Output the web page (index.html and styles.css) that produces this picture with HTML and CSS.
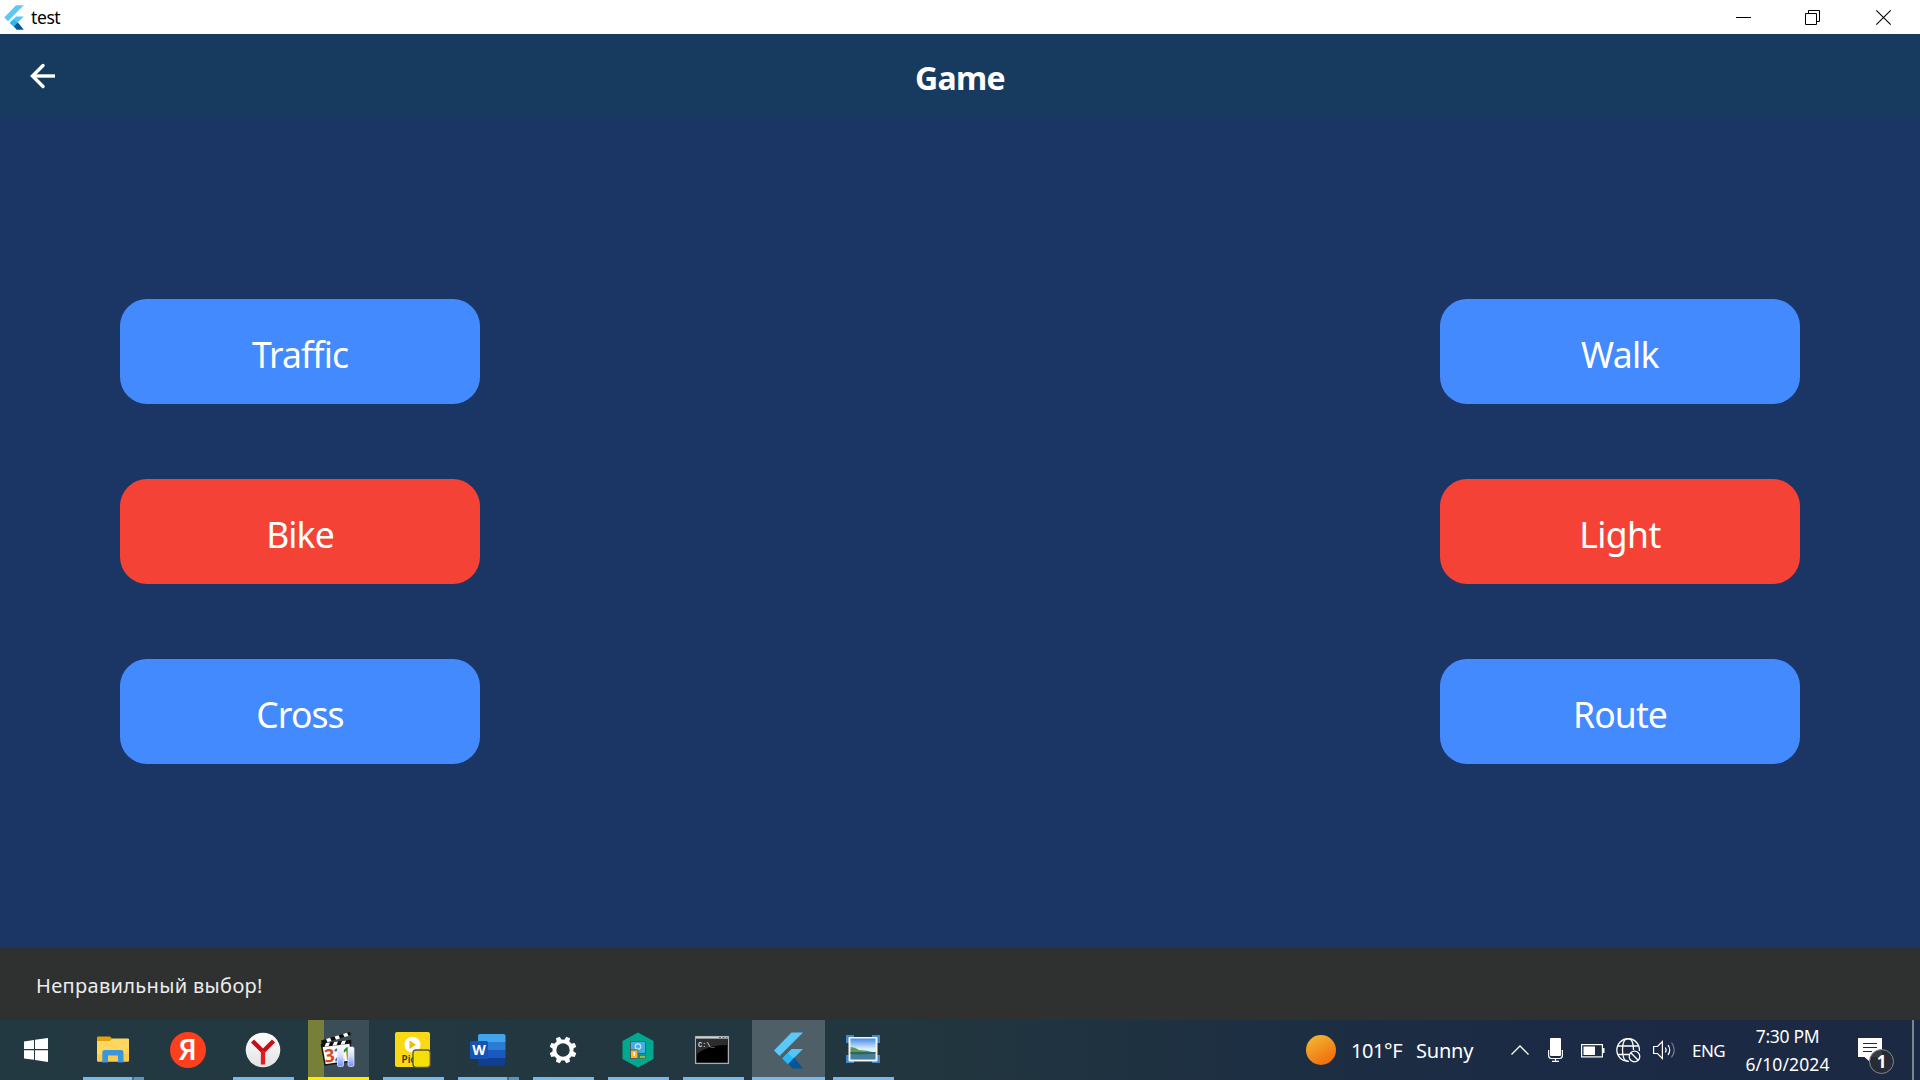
FILE: index.html
```html
<!DOCTYPE html>
<html lang="en">
<head>
<meta charset="utf-8">
<title>test</title>
<link rel="stylesheet" href="styles.css">
</head>
<body>
<svg class="defs" width="0" height="0" aria-hidden="true">
  <symbol id="flutter" viewBox="0 0 29 37">
    <path d="M17.500 0.500H29L5.500 24L0 18.500Z" fill="#5dc8f8"/>
    <path d="M17.500 17H29L14 32L8.500 26.300Z" fill="#54c5f8"/>
    <path d="M14 31.500L20 25.500L29 36.500H18.500Z" fill="#01579b"/>
    <path d="M8.300 26.500L14 21L19.500 26.500L14 32Z" fill="#29b6f6"/>
  </symbol>
</svg>

<header class="titlebar">
  <svg class="titlebar-logo" width="20" height="25"><use href="#flutter"/></svg>
  <span class="titlebar-text">test</span>
  <div class="window-controls">
    <button class="wc" aria-label="Minimize"><svg width="15" height="15"><path d="M0 7.500H15" stroke="#000"/></svg></button>
    <button class="wc" aria-label="Restore"><svg width="15" height="15" fill="none" stroke="#000"><path d="M.5 3.500H11.500V14.500H.5ZM3.500 3.500V.5H14.500V11.500H11.500"/></svg></button>
    <button class="wc wc-close" aria-label="Close"><svg width="15" height="15" stroke="#000" stroke-width="1.100"><path d="M.3 .3L14.700 14.700M14.700 .3L.3 14.700"/></svg></button>
  </div>
</header>

<div class="appbar">
  <button class="back" aria-label="Back"><svg width="26" height="26" fill="none" stroke="#fff" stroke-width="3.400"><path d="M25 13H3"/><path d="M13 2.500L2.500 13L13 23.500" stroke-linecap="round"/></svg></button>
  <h1 class="title">Game</h1>
</div>

<main class="board">
  <div class="column">
    <button class="card">Traffic</button>
    <button class="card wrong">Bike</button>
    <button class="card">Cross</button>
  </div>
  <div class="column">
    <button class="card walk">Walk</button>
    <button class="card wrong light">Light</button>
    <button class="card">Route</button>
  </div>
</main>

<div class="snackbar"><span class="snackbar-text">Неправильный выбор!</span></div>

<footer class="taskbar">
  <div class="task start"><svg width="24" height="24" fill="#fff"><path d="M0 3.400L10 2V11H0ZM11 1.800L24 0V11H11ZM0 12.200H10V21.800L0 20.600ZM11 12.200H24V24L11 22Z"/></svg></div>
  <div class="task open grouped">
    <svg width="32" height="28">
      <path d="M0 1.500Q0 .5 1 .5H13L15.500 3L14 5H0Z" fill="#e3a208"/>
      <path d="M0 5H13L15.500 2.500H31Q32 2.500 32 3.500V24.500Q32 25.500 31 25.500H1Q0 25.500 0 24.500Z" fill="#ffd75e"/>
      <path d="M0 18H32V24.500Q32 25.500 31 25.500H1Q0 25.500 0 24.500Z" fill="#fbcb4b"/>
      <path d="M5.300 26.500V16.500Q5.300 14 7.800 14H24Q26.500 14 26.500 16.500V26.500H21V19.500H11V26.500Z" fill="#3a96dd"/>
    </svg>
  </div>
  <div class="task"><span class="yandex">Я</span></div>
  <div class="task open">
    <svg width="36" height="36">
      <defs><linearGradient id="yb" x1="0" y1="0" x2="0" y2="1"><stop offset="0" stop-color="#fff"/><stop offset="1" stop-color="#e2e2e2"/></linearGradient></defs>
      <circle cx="18" cy="18" r="17.300" fill="url(#yb)"/>
      <path d="M7.500 9L18 19.500M28.500 9L18 19.500" stroke="#c90d13" stroke-width="4.300" fill="none"/>
      <path d="M18 18.500V32.500" stroke="#e01b22" stroke-width="4.300"/>
    </svg>
  </div>
  <div class="task open media">
    <svg width="36" height="38">
      <defs><linearGradient id="pb" x1="0" y1="0" x2="0" y2="1"><stop offset="0" stop-color="#fff"/><stop offset=".45" stop-color="#d5dcf8"/><stop offset="1" stop-color="#6f8fff"/></linearGradient></defs>
      <path d="M1 9.500L30 1L31 4L2 13Z" fill="#101010"/>
      <path d="M6 8L10 6.800L11.500 10L7.500 11.200ZM14.500 5.500L18.500 4.300L20 7.500L16 8.700ZM23 3L27 1.800L28.500 4.900L24.500 6.100Z" fill="#fff"/>
      <path d="M1.500 14L30 10.500L32 30L5 34Z" fill="#fbfbfb" stroke="#151515" stroke-width="1.500"/>
      <path d="M1 12.500L31 8.800L31.500 12.500L1.500 16.200Z" fill="#101010"/>
      <path d="M6 12L10 11.500L8.500 15.200L4.500 15.700ZM14 11L18 10.500L16.500 14.200L12.500 14.700ZM22 10L26 9.500L24.500 13.200L20.500 13.700Z" fill="#fff"/>
      <g transform="rotate(-6 6 31)"><text x="5" y="31.500" class="clap" fill="#d9481c">3</text><text x="14.500" y="31.500" class="clap" fill="#3877bd">2</text><text x="22.500" y="31.500" class="clap" fill="#258b31">1</text></g>
      <rect x="17.500" y="16" width="6" height="19.500" rx="1.500" fill="url(#pb)" stroke="#e9eeff" stroke-width=".7"/>
      <rect x="28" y="16" width="6" height="19.500" rx="1.500" fill="url(#pb)" stroke="#e9eeff" stroke-width=".7"/>
    </svg>
  </div>
  <div class="task open">
    <svg width="36" height="36">
      <rect x="0" y="0" width="35" height="35" rx="2" fill="#f9d915"/>
      <circle cx="17.500" cy="12.700" r="8" fill="#fff"/><path d="M14.500 8.500L21 12.700L14.500 17Z" fill="#e9bd0c"/>
      <text x="6.500" y="31" class="pic">Pic</text>
      <rect x="18" y="18" width="17.300" height="17.300" rx="3" fill="#f4e008" stroke="#55554a" stroke-width="1.300"/>
    </svg>
  </div>
  <div class="task open grouped">
    <svg width="36" height="32">
      <path d="M8 2Q8 0 10 0H33.500Q35.500 0 35.500 2V8H8Z" fill="#41a5ee"/><path d="M8 8H35.500V16H8Z" fill="#2b7cd3"/><path d="M8 16H35.500V24H8Z" fill="#185abd"/><path d="M8 24H35.500V30Q35.500 32 33.500 32H10Q8 32 8 30Z" fill="#103f91"/>
      <rect x="0" y="7" width="18" height="18" rx="1.500" fill="#1753b4"/><text x="9" y="20.500" text-anchor="middle" class="word">W</text>
    </svg>
  </div>
  <div class="task open">
    <svg width="28" height="28" viewBox="-14 -14 28 28">
      <g fill="#fff"><circle r="10.500"/>
      <g id="teeth"><path id="tooth" d="M-2.800 -9.500L-2 -13.500H2L2.800 -9.500Z" transform="rotate(22.500)"/><use href="#tooth" transform="rotate(45)"/><use href="#tooth" transform="rotate(90)"/><use href="#tooth" transform="rotate(135)"/></g><use href="#teeth" transform="rotate(180)"/></g>
      <circle r="6.700" fill="#22373f"/>
    </svg>
  </div>
  <div class="task open">
    <svg width="32" height="36">
      <path d="M16 .5L31.500 9V27L16 35.500L.5 27V9Z" fill="#00a88e"/>
      <rect x="8.500" y="9.500" width="15" height="12" fill="#42aee5" stroke="#505c65"/><circle cx="16" cy="14.500" r="2.700" fill="none" stroke="#b8e8ff" stroke-width="1.300"/><path d="M16 17V20" stroke="#b8e8ff"/>
      <rect x="8.500" y="18" width="7.500" height="8.500" fill="#ffb61c" stroke="#505c65"/><path d="M12.200 20V24" stroke="#fff" stroke-width="1.500"/>
      <rect x="17.500" y="23.300" width="6" height="3" fill="#8bc53f" stroke="#505c65" stroke-width=".8"/>
    </svg>
  </div>
  <div class="task open console">
    <svg width="34" height="28">
      <rect x=".6" y=".6" width="32.800" height="26.800" fill="#000" stroke="#a9adb0" stroke-width="1.300"/><path d="M1 1.700H33" stroke="#c9d0d4" stroke-width="2"/><path d="M24 1.500H26M27.500 1.500H29.500M31 1.500H32.500" stroke="#456a99" stroke-width="1.200"/>
      <path d="M1.500 3H32V9Q12 9 2 18Z" fill="#2c2c2c"/><text x="3" y="10.500" class="cmd">C:\_</text>
    </svg>
  </div>
  <div class="task open active"><svg width="29" height="37"><use href="#flutter"/></svg></div>
  <div class="task open photo">
    <svg width="34" height="28">
      <defs><linearGradient id="sky" x1="0" y1="0" x2="0" y2="1"><stop offset="0" stop-color="#438be9"/><stop offset=".5" stop-color="#dceefb"/></linearGradient></defs>
      <path d="M0 0H8V8H0ZM26 0H34V8H26ZM0 20H8V28H0ZM26 20H34V28H26Z" fill="#4389ca"/>
      <rect x="2.500" y="2" width="29" height="24.500" rx="1" fill="#f5f3ed"/><rect x="4.500" y="3.500" width="25" height="21" fill="url(#sky)"/>
      <path d="M4.500 12Q9 12 13 15Q21 15 29.500 18H4.500Z" fill="#5e9950"/><path d="M4.500 17.500H29.500V24.500H4.500Z" fill="#447f9d"/><path d="M4.500 17H29.500V18.500Q16 20 4.500 19Z" fill="#2f6654"/>
    </svg>
  </div>

  <div class="tray">
    <svg class="sun" width="30" height="30"><defs><linearGradient id="sg" x1=".2" y1="0" x2=".8" y2="1"><stop offset="0" stop-color="#f2b830"/><stop offset="1" stop-color="#f1670c"/></linearGradient></defs><circle cx="15" cy="15" r="15" fill="url(#sg)"/></svg>
    <span class="temp">101°F</span>
    <span class="sky">Sunny</span>
    <svg class="chev" width="18" height="10" fill="none" stroke="#fff" stroke-width="1.300"><path d="M.5 9.500L9 1L17.500 9.500"/></svg>
    <svg class="mic" width="15" height="24" fill="none" stroke="#fff"><rect x="2" y="0" width="11" height="18" rx="1" fill="#fff" stroke="none"/><path d="M.6 12V17.500Q.6 20.500 3.500 20.500H11.500Q14.400 20.500 14.400 17.500V12M7.500 20.500V23M4 23.300H11" stroke-width="1.200"/></svg>
    <svg class="battery" width="24" height="14"><rect x=".6" y=".6" width="20.800" height="12.300" fill="none" stroke="#fff" stroke-width="1.200"/><path d="M22 4H23.500V9H22ZM2.500 2.500H14V11H2.500Z" fill="#fff"/></svg>
    <svg class="globe" width="25" height="25" fill="none" stroke="#fff" stroke-width="1.300"><path d="M23.400 13A11.300 11.300 0 1 0 13 23.300"/><path d="M17.500 12Q17.500 .7 12 .7Q6.500 .7 6.500 12Q6.500 23.300 12 23.300M2 8H22.500M2 16.500H13"/><circle cx="18.500" cy="18.500" r="5.300"/><path d="M14.800 14.800L22.200 22.200"/></svg>
    <svg class="speaker" width="23" height="20" fill="none" stroke="#fff" stroke-width="1.200"><path d="M.6 6.500H4.500L9.400 1.500V18.500L4.500 13.500H.6Z"/><path d="M12.300 7.500Q14 10 12.300 12.500M15 5Q18.500 10 15 15"/><path d="M18.500 2.500Q24 10 18.500 17.500" opacity=".4"/></svg>
    <span class="lang">ENG</span>
    <div class="clock"><span class="time">7:30 PM</span><span class="date">6/10/2024</span></div>
    <div class="notice">
      <svg width="24" height="24"><path d="M0 0H24V19H12V24L6.500 19H0Z" fill="#fff"/><path d="M5 5.500H19M5 9.500H19M5 13.500H14" stroke="#1b2a44" stroke-width="1.200"/></svg>
      <span class="badge">1</span>
    </div>
    <div class="peek"></div>
  </div>
</footer>
</body>
</html>
```
FILE: styles.css
```css
* { box-sizing: border-box; }
body {
  margin: 0; width: 1920px; height: 1080px; overflow: hidden;
  display: flex; flex-direction: column;
  font-family: "Noto Sans", "Open Sans", sans-serif;
  background: #1b3564; color: #fff;
}
.defs { display: none; }
svg { display: block; flex: none; overflow: visible; }
span { white-space: nowrap; }
button { border: 0; padding: 0; background: none; color: inherit; font: inherit; }

.titlebar { flex: none; height: 34px; background: #fff; color: #000; display: flex; align-items: center; padding-left: 4px; }
.titlebar-text { margin-left: 7px; font-size: 17.5px; line-height: 34px; letter-spacing: -.4px; }
.window-controls { margin-left: auto; display: flex; }
.wc { width: 69px; height: 34px; display: flex; align-items: center; justify-content: center; }
.wc-close { width: 73px; }

.appbar { flex: none; height: 84px; background: #173b5f; display: grid; grid-template-columns: 85px 1fr 85px; align-items: center; }
.back { justify-self: center; }
.title { margin: 0; padding-top: 4px; text-align: center; font-size: 32px; line-height: 40px; font-weight: 700; letter-spacing: -.7px; }

.board { flex: 1; display: flex; justify-content: space-between; align-items: center; padding: 0 120px 3px; }
.column { display: flex; flex-direction: column; gap: 75px; }
.card { width: 360px; height: 105px; border-radius: 27px; background: #448aff; font-size: 35.5px; line-height: 48px; padding-top: 5px; text-align: center; letter-spacing: -.9px; }
.walk, .light { letter-spacing: -.6px; }
.wrong { background: #f44336; }

.snackbar { flex: none; height: 72px; background: #2f3130; display: flex; align-items: center; padding: 3px 36px 0; }
.snackbar-text { font-size: 20px; letter-spacing: .33px; color: #ececec; }

.taskbar { flex: none; height: 60px; display: flex; background: linear-gradient(90deg, #233941, #22363f 48%, #1d2f42 65%, #1b2a45 82%, #1b2943); }
.task { flex: none; width: 61px; height: 60px; margin: 0 7px; padding-right: 2px; display: flex; align-items: center; justify-content: center; }
.start { width: 72px; margin: 0 4px 0 0; padding-right: 0; }
.open { border-bottom: 3px solid #76b9ed; padding-top: 3px; }
.grouped { border-image: linear-gradient(90deg, #76b9ed 47px, #436f8f 47px, #436f8f 49px, #6094bc 49px) 3; border-width: 0 0 3px; }
.media { background: linear-gradient(90deg, #777f38 16px, #3b4d56 16px); border-color: #ffea00; }
.console { padding-right: 3px; padding-top: 2px; }
.active { width: 73px; margin: 0 1px; padding-right: 0; background: #4e5f67; }
.photo { padding-top: 0; }
.yandex { width: 36px; height: 36px; border-radius: 50%; background: #fc3f1d; font-size: 28px; font-weight: 600; line-height: 35px; text-align: center; }
.clap { font-size: 18px; font-weight: 700; }
.pic { font-size: 10px; font-weight: 600; fill: #393610; }
.word { font-size: 14px; font-weight: 700; fill: #fff; }
.cmd { font: 700 7px "Liberation Mono", monospace; fill: #ddd; }

.tray { margin-left: auto; height: 60px; display: flex; align-items: center; font-size: 20px; }
.temp { width: 53px; margin-left: 15px; padding-top: 1px; letter-spacing: -.4px; }
.sky { width: 58px; margin-left: 12px; padding-top: 1px; letter-spacing: -.2px; }
.chev { margin-left: 37px; }
.mic { margin-left: 19px; }
.battery { margin-left: 18px; margin-top: 1px; }
.globe { margin-left: 11px; margin-top: 1px; }
.speaker { margin-left: 12px; }
.lang { width: 35px; margin-left: 16px; padding-top: 1px; font-size: 17px; letter-spacing: -.5px; }
.clock { width: 88px; margin-left: 17px; display: flex; flex-direction: column; align-items: center; font-size: 17.5px; line-height: 28px; padding-right: 1px; padding-bottom: 1px; }
.time { letter-spacing: -.3px; }
.date { letter-spacing: .1px; }
.notice { position: relative; width: 24px; margin-left: 26px; }
.badge { position: absolute; left: 11px; top: 11px; width: 25px; height: 25px; border: 1px solid #84878c; border-radius: 50%; background: rgba(40, 44, 52, .93); font-size: 17px; font-weight: 700; line-height: 23px; text-align: center; }
.peek { width: 2px; height: 60px; margin-left: 30px; margin-right: 6px; background: #7b8494; }
```
